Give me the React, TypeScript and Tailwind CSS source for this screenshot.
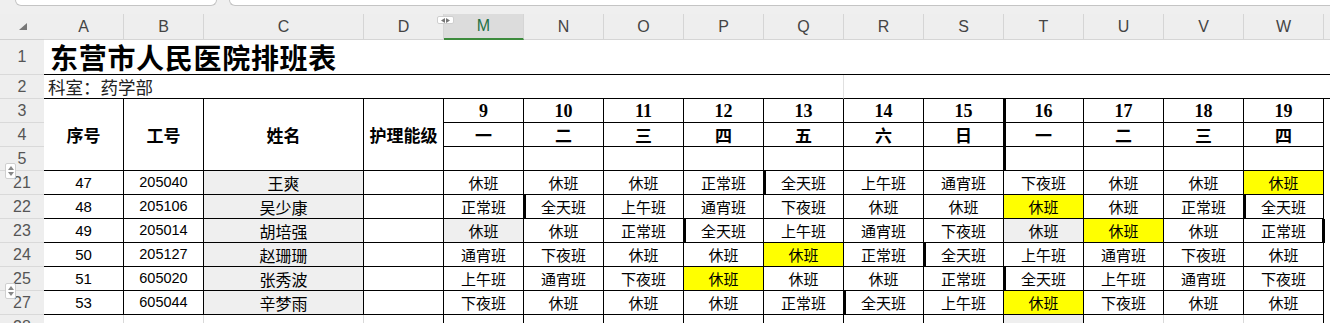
import React from 'react';

const cjk = "font-['Noto_Sans_CJK_SC',sans-serif]";
const num = "font-['Liberation_Sans','Noto_Sans_CJK_SC',sans-serif]";

const letters = ['A', 'B', 'C', 'D', 'M', 'N', 'O', 'P', 'Q', 'R', 'S', 'T', 'U', 'V', 'W'];
const dates = ['9', '10', '11', '12', '13', '14', '15', '16', '17', '18', '19'];
const weekdays = ['一', '二', '三', '四', '五', '六', '日', '一', '二', '三', '四'];
const dayCols = ['M', 'N', 'O', 'P', 'Q', 'R', 'S', 'T', 'U', 'V', 'W'];

interface Staff {
  row: string;
  no: string;
  id: string;
  name: string;
  shifts: string[];
}

const staff: Staff[] = [
  { row: '21', no: '47', id: '205040', name: '王爽', shifts: ['休班', '休班', '休班', '正常班', '全天班', '上午班', '通宵班', '下夜班', '休班', '休班', '休班'] },
  { row: '22', no: '48', id: '205106', name: '吴少康', shifts: ['正常班', '全天班', '上午班', '通宵班', '下夜班', '休班', '休班', '休班', '休班', '正常班', '全天班'] },
  { row: '23', no: '49', id: '205014', name: '胡培强', shifts: ['休班', '休班', '正常班', '全天班', '上午班', '通宵班', '下夜班', '休班', '休班', '休班', '正常班'] },
  { row: '24', no: '50', id: '205127', name: '赵珊珊', shifts: ['通宵班', '下夜班', '休班', '休班', '休班', '正常班', '全天班', '上午班', '通宵班', '下夜班', '休班'] },
  { row: '25', no: '51', id: '605020', name: '张秀波', shifts: ['上午班', '通宵班', '下夜班', '休班', '休班', '休班', '正常班', '全天班', '上午班', '通宵班', '下夜班'] },
  { row: '27', no: '53', id: '605044', name: '辛梦雨', shifts: ['下夜班', '休班', '休班', '休班', '正常班', '全天班', '上午班', '休班', '下夜班', '休班', '休班'] },
];

// cells keyed by column+row
const yellow = new Set(['W21', 'T22', 'U23', 'Q24', 'P25', 'T27']);
const grey = new Set(['M23', 'T23']);
const thickLeft = new Set(['Q21', 'N22', 'P23', 'W22', 'S24', 'T25', 'R27', 'T3', 'T4', 'T5']);

const RowHead = ({ label }: { label: string }) => (
  <div className={`flex items-center justify-center overflow-hidden bg-[#eeeeee] border-b border-[#d9d9d9] text-[16px] leading-none text-[#555] ${num}`}>
    {label}
  </div>
);

export default function App() {
  return (
    <div className="relative h-[323px] w-[1330px] overflow-hidden bg-white">
      {/* top strip */}
      <div className="flex h-[14px] gap-[12px] bg-[#efefef] pl-[15px]">
        <div className="h-[6px] w-[202px] rounded-b-[6px] border border-t-0 border-[#c4c4c4] bg-white" />
        <div className="h-[6px] flex-1 rounded-bl-[6px] border border-t-0 border-r-0 border-[#c4c4c4] bg-white" />
      </div>

      <div className="grid grid-cols-[44px_80px_80px_160px_80px_repeat(11,80px)_6px] grid-rows-[26px_35px_24px_24px_24px_24px_24px_24px_24px_24px_24px_24px_24px]">
        {/* column header */}
        <div className="flex items-end justify-start bg-[#eeeeee] border-b border-[#d0d0d0] pb-[9px] pl-[19px]">
          <svg width="8" height="7" viewBox="0 0 8 7">
            <polygon points="8,0 8,7 0,7" fill="#777" />
          </svg>
        </div>
        {letters.map(l =>
          l === 'M' ? (
            <div
              key={l}
              className={`flex items-center justify-center bg-[#dcdcdc] border-r border-[#d5d5d5] border-b-2 border-b-[#3d8b3d] text-[16px] text-[#1f7244] ${num}`}
            >
              {l}
            </div>
          ) : (
            <div
              key={l}
              className={`flex items-center justify-center bg-[#eeeeee] border-r border-b border-[#d5d5d5] text-[16px] text-[#444] ${num}`}
            >
              {l}
            </div>
          )
        )}
        <div className="bg-[#eeeeee] border-b border-[#d5d5d5]" />

        {/* row 1 */}
        <RowHead label="1" />
        <div className={`col-span-16 flex items-center border-b border-black pl-[6px] text-[28px] font-bold leading-none tracking-[0.7px] text-black ${cjk}`}>
          东营市人民医院排班表
        </div>

        {/* row 2 */}
        <RowHead label="2" />
        <div className={`col-span-9 flex items-center border-b border-r border-b-black border-r-[#e0e0e0] pl-[4px] text-[17.5px] leading-none text-[#222] ${cjk}`}>
          科室：药学部
        </div>
        <div className="col-span-7 border-b border-black" />

        {/* rows 3-5 */}
        <RowHead label="3" />
        {['序号', '工号', '姓名', '护理能级'].map(t => (
          <div
            key={t}
            className={`row-span-3 flex items-center justify-center border-r border-b border-black text-[17px] font-bold leading-none text-black ${cjk}`}
          >
            {t}
          </div>
        ))}
        {dates.map((d, i) => (
          <div
            key={d}
            className={`flex items-center justify-center border-r border-b border-black text-[18px] font-bold leading-none text-black font-['Liberation_Serif',serif] ${thickLeft.has(dayCols[i] + '3') ? 'shadow-[inset_2px_0_0_#000]' : ''}`}
          >
            {d}
          </div>
        ))}
        <div />

        <RowHead label="4" />
        {weekdays.map((w, i) => (
          <div
            key={i}
            className={`flex items-center justify-center border-r border-b border-black text-[17px] font-bold leading-none text-black ${cjk} ${thickLeft.has(dayCols[i] + '4') ? 'shadow-[inset_2px_0_0_#000]' : ''}`}
          >
            {w}
          </div>
        ))}
        <div />

        <RowHead label="5" />
        {dayCols.map(c => (
          <div
            key={c}
            className={`border-r border-b border-black ${thickLeft.has(c + '5') ? 'shadow-[inset_2px_0_0_#000]' : ''}`}
          />
        ))}
        <div />

        {/* staff rows */}
        {staff.map(s => (
          <React.Fragment key={s.row}>
            <RowHead label={s.row} />
            <div className={`flex items-center justify-center border-r border-b border-black text-[15px] leading-none text-black ${num}`}>
              {s.no}
            </div>
            <div className={`flex items-center justify-center border-r border-b border-black text-[14.5px] leading-none text-black ${num}`}>
              {s.id}
            </div>
            <div className={`flex items-center justify-center bg-[#efefef] border-r border-b border-black text-[16px] leading-none text-black ${cjk}`}>
              {s.name}
            </div>
            <div className="border-r border-b border-black" />
            {s.shifts.map((sh, i) => {
              const key = dayCols[i] + s.row;
              const bg = yellow.has(key) ? 'bg-[#ffff00]' : grey.has(key) ? 'bg-[#efefef]' : 'bg-white';
              const thick = thickLeft.has(key)
                ? 'shadow-[inset_2px_0_0_#000]'
                : key === 'W23'
                  ? 'shadow-[inset_-1px_0_0_#000]'
                  : '';
              return (
                <div
                  key={key}
                  className={`flex items-center justify-center border-r border-b border-black text-[15px] leading-none text-black ${cjk} ${bg} ${thick}`}
                >
                  {sh}
                </div>
              );
            })}
            <div className={s.row === '23' ? 'shadow-[inset_1px_0_0_#000]' : ''} />
          </React.Fragment>
        ))}

        {/* row 28 */}
        <RowHead label="28" />
        <div className="border-r border-[#d9d9d9]" />
        <div className="border-r border-[#d9d9d9]" />
        <div className="border-r border-[#d9d9d9]" />
        <div className="border-r border-black" />
        {dayCols.map(c => (
          <div
            key={c}
            className={`border-r ${c === 'U' || c === 'V' ? 'border-[#d9d9d9]' : 'border-black'} ${c === 'T' ? 'bg-[#efefef]' : ''}`}
          />
        ))}
        <div />
      </div>

      {/* column resize handle over the header */}
      <div className="absolute left-[437px] top-[16px] flex h-[8px] w-[17px] items-center justify-center gap-[1px] rounded-[2px] border border-[#cfcfcf] bg-white">
        <svg width="4" height="5" viewBox="0 0 4 5">
          <polygon points="4,0 4,5 0,2.5" fill="#777" />
        </svg>
        <svg width="4" height="5" viewBox="0 0 4 5">
          <polygon points="0,0 0,5 4,2.5" fill="#777" />
        </svg>
      </div>

      {/* row group toggles */}
      {['top-[163px]', 'top-[283px]'].map(t => (
        <div
          key={t}
          className={`absolute left-[5px] ${t} flex h-[16px] w-[11px] flex-col items-center justify-center gap-[2px] rounded-[2px] border border-[#cfcfcf] bg-white`}
        >
          <svg width="6" height="4" viewBox="0 0 6 4">
            <polygon points="0,4 6,4 3,0" fill="#888" />
          </svg>
          <svg width="6" height="4" viewBox="0 0 6 4">
            <polygon points="0,0 6,0 3,4" fill="#888" />
          </svg>
        </div>
      ))}
    </div>
  );
}
